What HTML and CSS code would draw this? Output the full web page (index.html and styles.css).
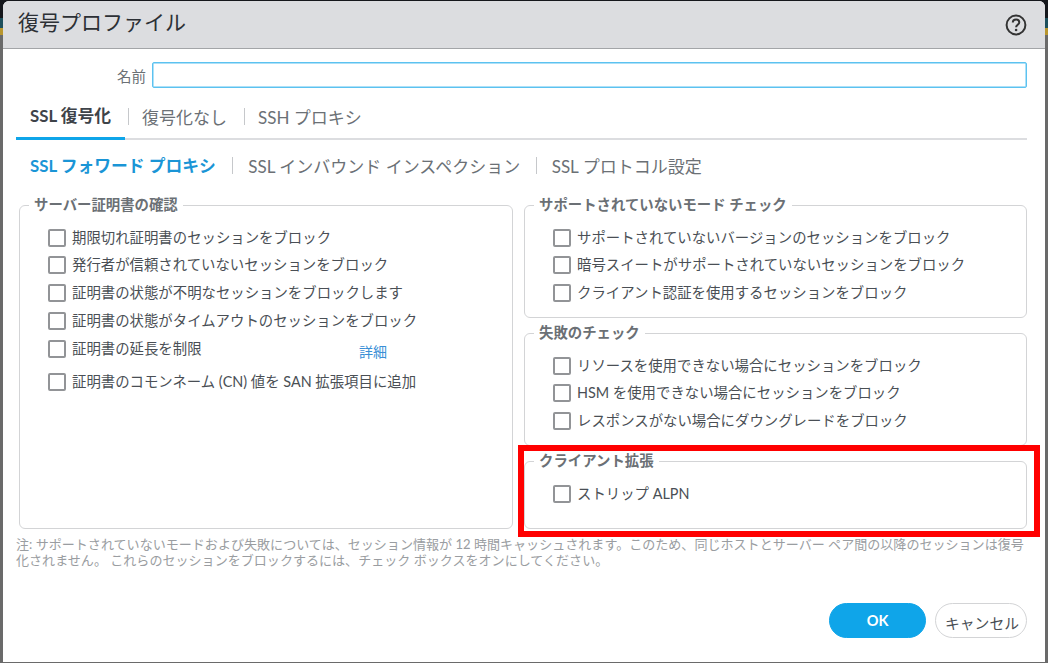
FILE: index.html
```html
<!DOCTYPE html>
<html lang="ja">
<head>
<meta charset="utf-8">
<title>復号プロファイル</title>
<link rel="stylesheet" href="styles.css">
</head>
<body>
<div class="dialog">
  <header class="head">
    <h1 class="title">復号プロファイル</h1>
    <svg class="help" width="24" height="24" viewBox="0 0 24 24" aria-hidden="true">
      <circle cx="12" cy="12" r="9.4" fill="none" stroke="#333" stroke-width="2"/>
      <path d="M8.8 9.6c0-2 1.4-3.1 3.3-3.1s3.200 1.100 3.200 2.800c0 2.500-3.200 2.500-3.200 5" fill="none" stroke="#333" stroke-width="2"/>
      <circle cx="12.100" cy="17" r="1.300" fill="#333"/>
    </svg>
  </header>
  <div class="body">
    <div class="name-row">
      <label class="name-label">名前</label>
      <div class="name-input"></div>
    </div>
    <nav class="tabs">
      <span class="tab active">SSL 復号化</span>
      <span class="tab">復号化なし</span>
      <span class="tab">SSH プロキシ</span>
    </nav>
    <nav class="subtabs">
      <span class="subtab active">SSL フォワード プロキシ</span>
      <span class="subtab">SSL インバウンド インスペクション</span>
      <span class="subtab">SSL プロトコル設定</span>
    </nav>
    <div class="columns">
      <fieldset class="group">
        <legend>サーバー証明書の確認</legend>
        <div class="check"><span class="box"></span><span>期限切れ証明書のセッションをブロック</span></div>
        <div class="check"><span class="box"></span><span>発行者が信頼されていないセッションをブロック</span></div>
        <div class="check"><span class="box"></span><span>証明書の状態が不明なセッションをブロックします</span></div>
        <div class="check"><span class="box"></span><span>証明書の状態がタイムアウトのセッションをブロック</span></div>
        <div class="check"><span class="box"></span><span class="grow">証明書の延長を制限</span><a class="more">詳細</a></div>
        <div class="check extra"><span class="box"></span><span>証明書のコモンネーム (CN) 値を SAN 拡張項目に追加</span></div>
      </fieldset>
      <div class="stack">
        <fieldset class="group">
          <legend>サポートされていないモード チェック</legend>
          <div class="check"><span class="box"></span><span>サポートされていないバージョンのセッションをブロック</span></div>
          <div class="check"><span class="box"></span><span>暗号スイートがサポートされていないセッションをブロック</span></div>
          <div class="check"><span class="box"></span><span>クライアント認証を使用するセッションをブロック</span></div>
        </fieldset>
        <fieldset class="group">
          <legend>失敗のチェック</legend>
          <div class="check"><span class="box"></span><span>リソースを使用できない場合にセッションをブロック</span></div>
          <div class="check"><span class="box"></span><span>HSM を使用できない場合にセッションをブロック</span></div>
          <div class="check"><span class="box"></span><span>レスポンスがない場合にダウングレードをブロック</span></div>
        </fieldset>
        <fieldset class="group last">
          <legend>クライアント拡張</legend>
          <div class="check"><span class="box"></span><span>ストリップ ALPN</span></div>
        </fieldset>
      </div>
    </div>
    <p class="note">注: サポートされていないモードおよび失敗については、セッション情報が 12 時間キャッシュされます。このため、同じホストとサーバー ペア間の以降のセッションは復号化されません。 これらのセッションをブロックするには、チェック ボックスをオンにしてください。</p>
    <footer class="actions">
      <button class="btn primary">OK</button>
      <button class="btn cancel">キャンセル</button>
    </footer>
  </div>
</div>
<div class="highlight"></div>
</body>
</html>
```
FILE: styles.css
```css
html, body {
  margin: 0;
  height: 100%;
}
body {
  position: relative;
  width: 1048px;
  height: 663px;
  overflow: hidden;
  padding: 1px 3px 1px 3px;
  box-sizing: border-box;
  background: linear-gradient(#15171c 0 18px, #1d4f5c 18px 28px, #b8962e 28px 35px, #6a6a6a 35px);
  font-family: Lato, "Noto Sans CJK JP", sans-serif;
  color: #4a4f55;
}
.dialog {
  height: 661px;
  background: #fff;
  border-radius: 6px 6px 0 0;
  display: flex;
  flex-direction: column;
  overflow: hidden;
}
.head {
  height: 47px;
  flex: none;
  background: #dcdde0;
  border-bottom: 1px solid #a3a5a8;
  display: flex;
  align-items: center;
  justify-content: space-between;
  padding: 0 17px 0 15px;
}
.title {
  margin: 0 0 7px;
  font-size: 21px;
  font-weight: 400;
  color: #2c3035;
}
.help {
  display: block;
  margin-top: 1px;
}
.body {
  flex: 1;
  display: flex;
  flex-direction: column;
  padding: 13px 18px 0 13px;
  min-height: 0;
}
.name-row {
  display: flex;
  align-items: center;
  gap: 6px;
}
.name-label {
  width: 130px;
  text-align: right;
  font-size: 14.500px;
  color: #6b7075;
}
.name-input {
  flex: 1;
  height: 24px;
  border: 1px solid #5cc2f0;
  border-radius: 2px;
  box-shadow: inset 0 0 0 0.500px #5cc2f0;
}
.tabs {
  display: flex;
  align-items: center;
  height: 49px;
  margin-top: 3px;
  border-bottom: 2px solid #dcdde0;
  box-sizing: border-box;
}
.tab {
  position: relative;
  height: 100%;
  display: flex;
  align-items: center;
  margin-right: 3px;
  padding: 3px 14px 0;
  box-sizing: border-box;
  font-size: 17px;
  color: #6b7075;
}
.tab + .tab::before {
  content: "";
  position: absolute;
  left: 0;
  top: 17px;
  height: 17px;
  width: 1px;
  background: #c6c8cb;
}
.tab.active {
  font-size: 16.800px;
  font-weight: 700;
  color: #3e4349;
  border-bottom: 3px solid #0fa5e9;
  margin-bottom: -2px;
  height: calc(100% + 2px);
  padding-top: 2px;
}
.subtabs {
  display: flex;
  align-items: center;
  height: 30px;
  margin-top: 10px;
  padding-left: 14px;
}
.subtab {
  position: relative;
  font-size: 17px;
  color: #6b7075;
  padding-right: 31.500px;
}
.subtab.active {
  font-size: 16.800px;
  font-weight: 700;
  color: #1a95d6;
  padding-right: 32.500px;
}
.subtab + .subtab::before {
  content: "";
  position: absolute;
  left: -16px;
  top: 4px;
  height: 17px;
  width: 1px;
  background: #c6c8cb;
}
.columns {
  display: grid;
  grid-template-columns: 494px 503px;
  gap: 11px;
  margin: 16px 0 0 3px;
}
.stack {
  display: flex;
  flex-direction: column;
  gap: 6px;
}
.group {
  margin: 0;
  min-width: 0;
  padding: 11.600px 12px 0 28px;
  border: 1px solid #d3d4d6;
  border-radius: 6px;
  box-sizing: border-box;
}
.stack .group {
  height: 122px;
}
.stack .group.last {
  height: 77px;
}
.group legend {
  padding: 0 5px;
  margin-left: -19px;
  font-size: 14.400px;
  font-weight: 700;
  color: #6b7075;
  line-height: 18px;
}
.check {
  display: flex;
  align-items: flex-start;
  height: 27.800px;
  font-size: 14.400px;
  line-height: 24px;
  color: #4a4f55;
}
.check.extra {
  margin-top: 5.500px;
}
.grow {
  flex: 1;
}
.box {
  flex: none;
  width: 14px;
  height: 14px;
  margin: 3px 6px 0 0;
  border: 2px solid #929497;
  border-radius: 2px;
  background: #fff;
}
.more {
  font-size: 14px;
  line-height: 20px;
  color: #3a8fd6;
  margin: 5px 113px 0 0;
}
.note {
  margin: 7px 0 0;
  font-size: 13.060px;
  line-height: 16px;
  color: #9a9da1;
}
.actions {
  display: flex;
  justify-content: flex-end;
  gap: 9px;
  margin-top: 35px;
}
.btn {
  width: 92px;
  height: 35px;
  border: 1px solid #d3d4d6;
  border-radius: 18px;
  background: #fff;
  font: inherit;
  font-size: 14.500px;
  color: #4a4f55;
  padding: 0;
}
.btn.cancel {
  font-size: 14.800px;
  padding: 4px 0 0 2px;
}
.btn.primary {
  width: 97px;
  border-color: #0fa5e9;
  background: #0fa5e9;
  color: #fff;
  font-weight: 700;
  padding-bottom: 1px;
}
.highlight {
  position: absolute;
  left: 518px;
  top: 445px;
  width: 522px;
  height: 92px;
  box-sizing: border-box;
  border: 6px solid #f00;
}
```
